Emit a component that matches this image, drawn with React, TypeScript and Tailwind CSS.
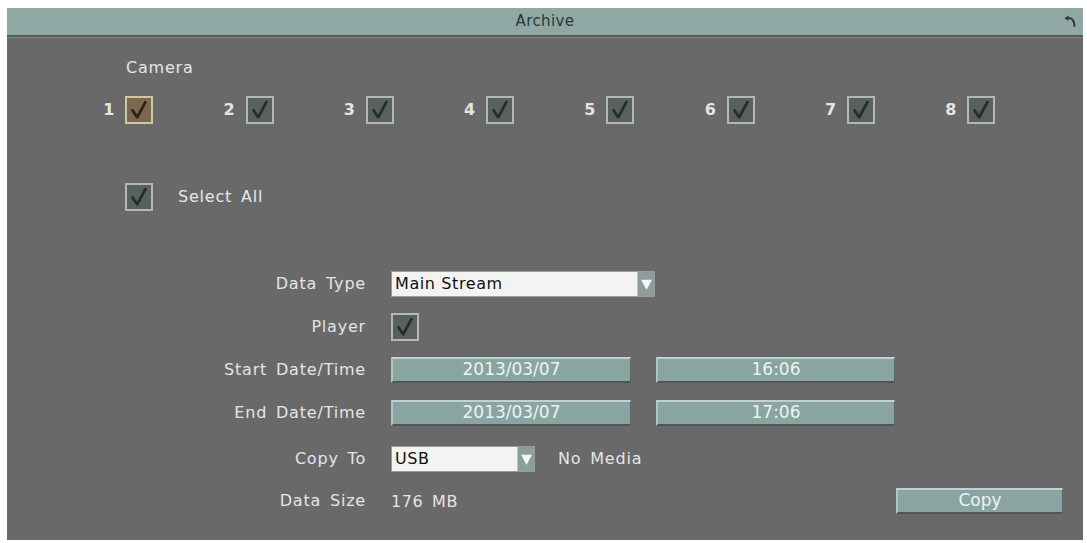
import React from "react";

const font = { fontFamily: '"DejaVu Sans", Verdana, sans-serif' };

function Check({ color }: { color: string }) {
  return (
    <svg viewBox="0 0 24 24" className="h-[22px] w-[22px]">
      <path d="M5 12.5 L10 20 L19 3.5" fill="none" stroke={color} strokeWidth="3" strokeLinecap="round" strokeLinejoin="round" />
    </svg>
  );
}

function Box({ active = false }: { active?: boolean }) {
  return (
    <div
      className={
        active
          ? "flex h-[28px] w-[28px] items-center justify-center border-2 border-[#cfc6a4] bg-[#7c6751]"
          : "flex h-[28px] w-[28px] items-center justify-center border-2 border-[#b3b8b3] bg-[#596060]"
      }
    >
      <Check color={active ? "#2e2015" : "#262b2a"} />
    </div>
  );
}

function Select({ value, width }: { value: string; width: string }) {
  return (
    <div className={`flex h-[26px] items-stretch border border-[#9a9a98] bg-[#f3f3f1] ${width}`}>
      <div className="flex flex-1 items-center pl-[3px] text-[16px] tracking-[0.6px] text-[#111]">{value}</div>
      <div className="flex w-[17px] items-center justify-center border-l border-[#b8c0c0] bg-[#8d9d9d]">
        <svg viewBox="0 0 12 12" className="h-[13px] w-[13px]">
          <path d="M1 1.5 L11 1.5 L6 11 Z" fill="#f4f6f6" />
        </svg>
      </div>
    </div>
  );
}

function Field({ value, width }: { value: string; width: string }) {
  return (
    <div
      className={`flex h-[26px] items-center justify-center border-t-2 border-l-2 border-b-2 border-r border-t-[#c2d1cf] border-l-[#b3c3c1] border-b-[#4f5856] border-r-[#5c6664] bg-[#89a5a2] text-[17px] text-[#eef3f2] ${width}`}
    >
      {value}
    </div>
  );
}

function Label({ children }: { children: React.ReactNode }) {
  return <div className="w-[359px] shrink-0 text-right text-[16px] tracking-[0.8px] [word-spacing:3px] text-[#e4e4e4]">{children}</div>;
}

export default function App() {
  const cams = [1, 2, 3, 4, 5, 6, 7, 8];
  return (
    <div className="h-[543px] w-[1087px] bg-white pl-[7px] pt-[8px]" style={font}>
      <div className="flex h-[532px] w-[1076px] flex-col bg-[#6a696a]">
        <div className="relative flex h-[29px] shrink-0 items-center justify-center border-b-2 border-[#525d5b] bg-[#8fa8a4] pb-[1px] text-[15px] tracking-[0.4px] text-[#2c3836]">
          Archive
          <svg viewBox="0 0 14 14" className="absolute right-[6px] top-[6px] h-[14px] w-[14px]">
            <path d="M4 4 Q11 3 11.5 12" fill="none" stroke="#2f3b39" strokeWidth="2" strokeLinecap="round" />
            <path d="M1.5 4.2 L5.5 1.5 L5.5 7 Z" fill="#2f3b39" />
          </svg>
        </div>
        <div className="h-[1px] bg-[#7b8584]" />

        <div className="ml-[119px] mt-[20px] h-[20px] text-[16px] leading-[20px] tracking-[0.8px] text-[#e6e6e6]">Camera</div>

        <div className="ml-[26px] mt-[18px] flex">
          {cams.map((n) => (
            <div key={n} className="flex w-[120.3px] items-center justify-end gap-[11px]">
              <span className="text-[16px] font-bold text-[#e4e4e4]">{n}</span>
              <Box active={n === 1} />
            </div>
          ))}
        </div>

        <div className="ml-[118px] mt-[59px] flex items-center gap-[25px]">
          <Box />
          <span className="text-[16px] tracking-[0.8px] [word-spacing:3px] text-[#e6e6e6]">Select All</span>
        </div>

        <div className="mt-[60px] flex items-center gap-[25px]">
          <Label>Data Type</Label>
          <Select value="Main Stream" width="w-[264px]" />
        </div>

        <div className="mt-[16px] flex items-center gap-[25px]">
          <Label>Player</Label>
          <Box />
        </div>

        <div className="mt-[16px] flex items-center gap-[25px]">
          <Label>Start Date/Time</Label>
          <Field value="2013/03/07" width="w-[240px]" />
          <Field value="16:06" width="w-[239px]" />
        </div>

        <div className="mt-[17px] flex items-center gap-[25px]">
          <Label>End Date/Time</Label>
          <Field value="2013/03/07" width="w-[240px]" />
          <Field value="17:06" width="w-[239px]" />
        </div>

        <div className="mt-[20px] flex items-center gap-[25px]">
          <Label>Copy To</Label>
          <div className="flex items-center gap-[23px]">
            <Select value="USB" width="w-[144px]" />
            <span className="text-[16px] tracking-[0.8px] [word-spacing:3px] text-[#e4e4e4]">No Media</span>
          </div>
        </div>

        <div className="mt-[15px] flex items-center gap-[25px] pr-[20px]">
          <Label>Data Size</Label>
          <span className="pt-[3px] text-[16px] tracking-[0.6px] [word-spacing:3px] text-[#e4e4e4]">176 MB</span>
          <div className="flex-1" />
          <Field value="Copy" width="w-[167px]" />
        </div>
      </div>
    </div>
  );
}
